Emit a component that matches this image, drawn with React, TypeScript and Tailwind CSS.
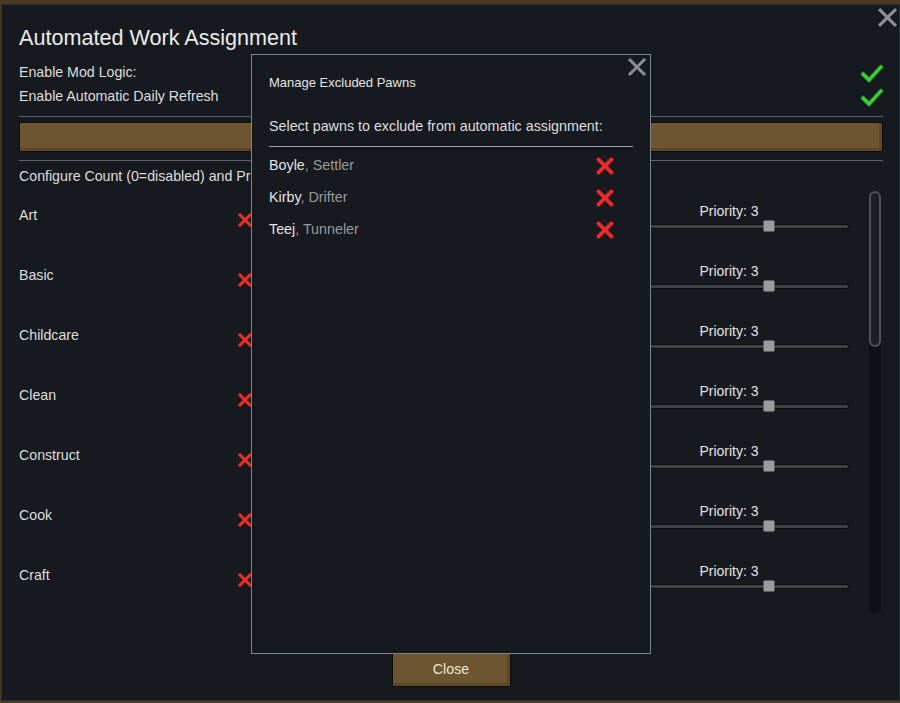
import React from 'react';

const workTypes = ['Art', 'Basic', 'Childcare', 'Clean', 'Construct', 'Cook', 'Craft'];

const pawns = [
  { name: 'Boyle', title: 'Settler' },
  { name: 'Kirby', title: 'Drifter' },
  { name: 'Teej', title: 'Tunneler' },
];

const CloseIcon = ({ size }: { size: number }) => (
  <svg width={size} height={size} viewBox="0 0 20 20">
    <path d="M3 3 L17 17 M17 3 L3 17" stroke="#8c8f91" strokeWidth={3} strokeLinecap="square" fill="none" />
  </svg>
);

const RedX = ({ size }: { size: number }) => (
  <svg width={size} height={size} viewBox="0 0 20 20">
    <path d="M3.5 3.5 L16.5 16.5 M16.5 3.5 L3.5 16.5" stroke="#7a1616" strokeWidth={4.6} strokeLinecap="round" fill="none" />
    <path d="M3.5 3.5 L16.5 16.5 M16.5 3.5 L3.5 16.5" stroke="#e2302d" strokeWidth={3.4} strokeLinecap="round" fill="none" />
  </svg>
);

const GreenCheck = () => (
  <svg width={24} height={20} viewBox="0 0 24 20">
    <path d="M3 11 L9 17 L21 4" stroke="#17561a" strokeWidth={5} strokeLinecap="round" strokeLinejoin="round" fill="none" />
    <path d="M3 11 L9 17 L21 4" stroke="#3fcf3a" strokeWidth={3.2} strokeLinecap="round" strokeLinejoin="round" fill="none" />
  </svg>
);

const PrioritySlider = ({ value, min, max }: { value: number; min: number; max: number }) => {
  const pct = ((value - min) / (max - min)) * 100;
  return (
    <div className="w-[240px] pt-[12px]">
      <div className="text-center text-[14px] leading-[16px] text-[#e2e2e2]">Priority: {value}</div>
      <div className="relative mt-[1px] h-[12px] flex items-center">
        <div className="w-full h-[5px] rounded-[2px] bg-[#3f4245] border border-[#0b0c0d]" />
        <div
          className="absolute top-0 w-[12px] h-[12px] -ml-[6px] bg-[#9a9b9c] border border-[#5c5e60] rounded-[2px]"
          style={{ left: `${pct}%` }}
        />
      </div>
    </div>
  );
};

const BrownBar = ({ className, children }: { className: string; children?: React.ReactNode }) => (
  <div
    className={`bg-[#6d5532] border border-[#0c0c0c] shadow-[inset_-3px_-3px_0_#5c4729] flex items-center justify-center ${className}`}
  >
    {children}
  </div>
);

export default function App() {
  return (
    <div className="w-[900px] h-[703px] bg-[#4a3b22] pt-[4px] pl-[1px] overflow-hidden font-['Liberation_Sans',Arial,sans-serif]">
      <div className="relative w-[899px] h-[697px] bg-[#16191d] border border-[#2b3035] pl-[17px] pr-[16px] pt-[21px] flex flex-col">
        <button className="absolute right-[1px] top-[2px]">
          <CloseIcon size={21} />
        </button>

        <h1 className="h-[24px] text-[21.6px] leading-[24px] text-[#ececec]">Automated Work Assignment</h1>

        <div className="mt-[11px] h-[24px] flex items-center justify-between text-[14.2px] text-[#dedede]">
          <span>Enable Mod Logic:</span>
          <span className="mr-[-1px]"><GreenCheck /></span>
        </div>
        <div className="h-[24px] flex items-center justify-between text-[14.2px] text-[#dedede]">
          <span>Enable Automatic Daily Refresh</span>
          <span className="mr-[-1px]"><GreenCheck /></span>
        </div>

        <div className="mt-[7px] h-px bg-[#5f6468]" />
        <BrownBar className="mt-[5px] h-[30px]" />
        <div className="mt-[8px] h-px bg-[#5f6468]" />

        <div className="mt-[3px] h-[24px] leading-[24px] text-[14.2px] text-[#dedede]">
          Configure Count (0=disabled) and Priority for each work type:
        </div>

        <div className="mt-[3px] h-[423px] flex">
          <div className="flex-1 pr-[20px] overflow-hidden">
            {workTypes.map((w) => (
              <div key={w} className="h-[60px] flex items-start">
                <div className="w-[218px] pt-[12px] leading-[24px] text-[14.2px] text-[#dedede]">{w}</div>
                <div className="mt-[21px]">
                  <RedX size={16} />
                </div>
                <div className="flex-1" />
                <PrioritySlider value={3} min={1} max={4} />
              </div>
            ))}
          </div>
          <div className="w-[12px] mr-[2px] h-full rounded-full bg-[#0e1113] flex flex-col">
            <div className="h-[156px] rounded-full border-2 border-[#4e5256] bg-[#1c1f22]" />
          </div>
        </div>

        <BrownBar className="mt-[38px] mx-auto w-[119px] h-[35px]">
          <span className="text-[14.2px] text-[#ece6d6]">Close</span>
        </BrownBar>

        <div className="absolute left-[249px] top-[49px] w-[400px] h-[600px] bg-[#16191d] border border-[#7d848a] pl-[17px] pr-[17px] pt-[19px]">
          <button className="absolute right-[3px] top-[2px]">
            <CloseIcon size={20} />
          </button>
          <div className="h-[18px] leading-[18px] text-[13px] text-[#e4e4e4]">Manage Excluded Pawns</div>
          <div className="mt-[26px] h-[16px] leading-[16px] text-[14.3px] text-[#dedede]">
            Select pawns to exclude from automatic assignment:
          </div>
          <div className="mt-[12px] h-px bg-[#9a9fa3]" />
          <div className="mt-[3px]">
            {pawns.map((p) => (
              <div key={p.name} className="h-[32px] flex items-center justify-between pr-[18px] text-[14.3px]">
                <span className="text-[#9b9b9b]">
                  <span className="text-[#e4e4e4]">{p.name}</span>, {p.title}
                </span>
                <RedX size={20} />
              </div>
            ))}
          </div>
        </div>
      </div>
    </div>
  );
}
